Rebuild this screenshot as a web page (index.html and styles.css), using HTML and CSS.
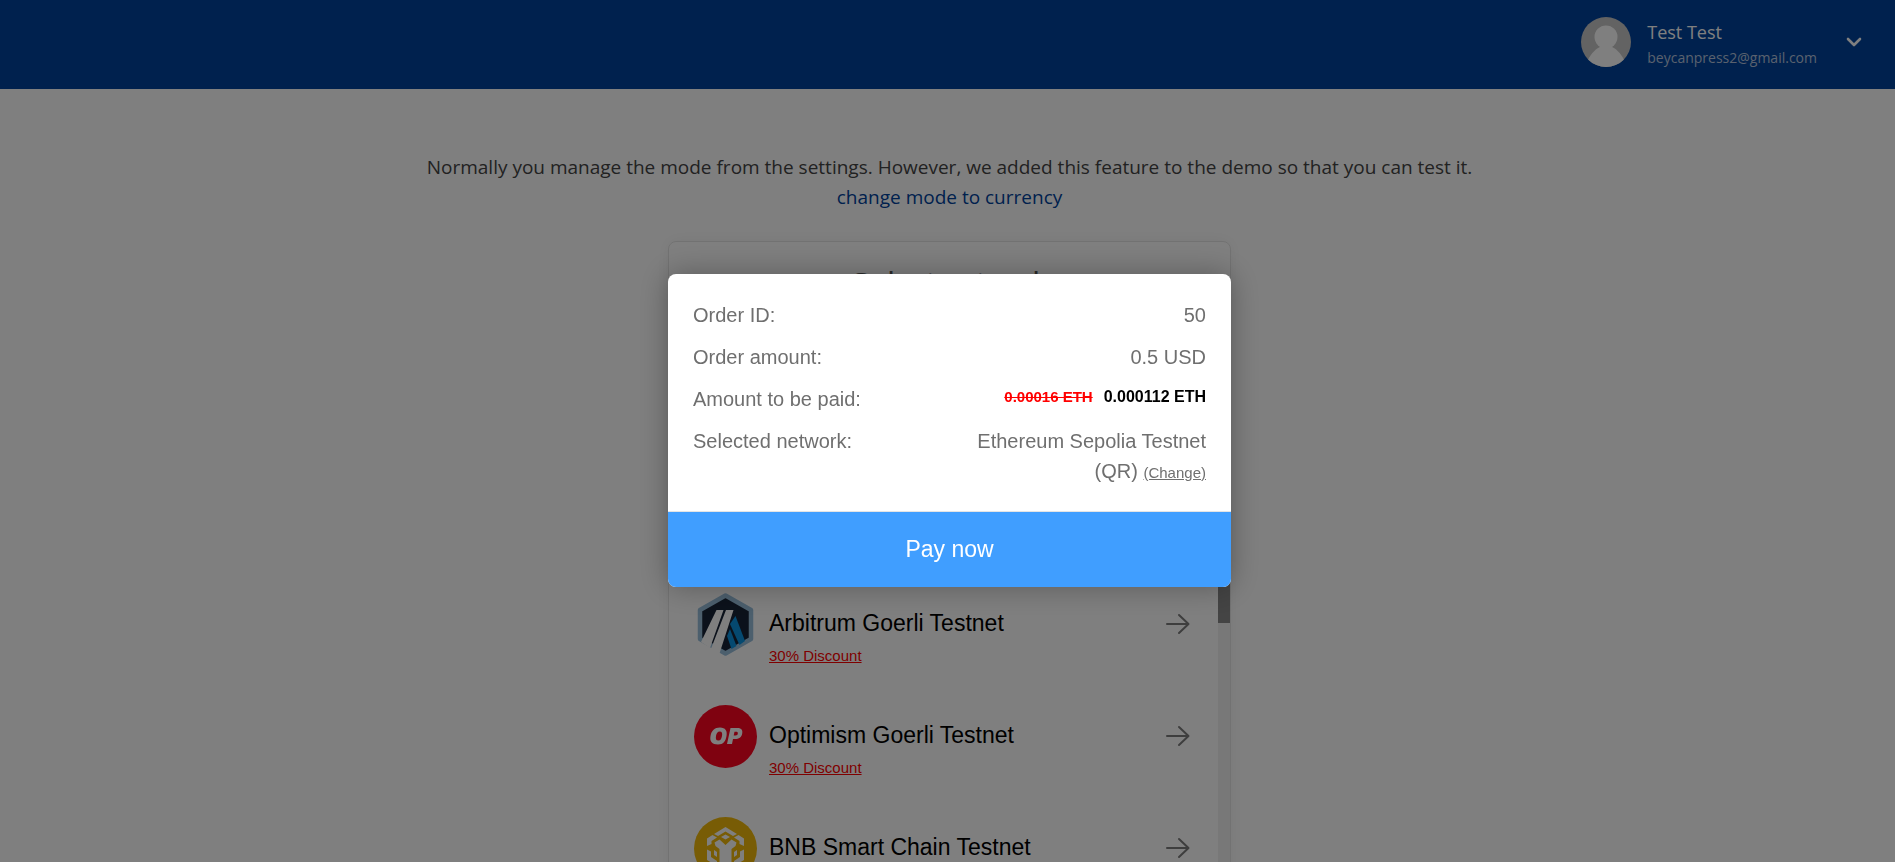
FILE: index.html
```html
<!DOCTYPE html>
<html lang="en">
<head>
<meta charset="utf-8">
<title>Payment</title>
<link rel="stylesheet" href="styles.css">
</head>
<body>
<header class="topbar">
  <svg class="avatar" viewBox="0 0 50 50" aria-hidden="true">
    <defs><clipPath id="round"><circle cx="25" cy="25" r="25"/></clipPath></defs>
    <g clip-path="url(#round)"><rect width="50" height="50" fill="#c6c6c6"/><circle cx="25" cy="20" r="11.5" fill="#fff"/><path d="M7 43C10 36 16 31 20 29.500H30C34 31 40 36 43 43V50H7Z" fill="#fff"/></g>
  </svg>
  <div class="user">
    <span class="user-name">Test Test</span>
    <span class="user-email">beycanpress2@gmail.com</span>
  </div>
  <button class="user-toggle" type="button" aria-label="Account menu">
    <svg width="16" height="12" viewBox="0 0 16 12"><path d="M2 3L8 9L14 3" fill="none" stroke="#fff" stroke-width="2.600" stroke-linecap="round" stroke-linejoin="round"/></svg>
  </button>
</header>

<main class="page">
  <p class="notice">Normally you manage the mode from the settings. However, we added this feature to the demo so that you can test it.<br><a href="#">change mode to currency</a></p>
  <section class="card">
    <h1 class="card-title">Select network</h1>
    <div class="list-wrap">
      <ul class="networks">
        <li><button class="network" type="button">
          <svg class="coin" viewBox="0 0 63 63" aria-hidden="true">
            <path d="M31.500 2.500L57 17V46L31.500 60.500L6 46V17Z" fill="#172336" stroke="#98bedb" stroke-width="4.500" stroke-linejoin="round"/>
            <path d="M41.500 23L51 48L45.500 52L36 31Z" fill="#0a93e0"/>
            <path d="M36 36L42.500 53L37.500 56L33 43Z" fill="#0a93e0"/>
            <path d="M22.500 17H29.500L16 55L7 49Z M32 17H39.500L25 62L16.500 57Z" fill="#fff"/>
          </svg>
          <span class="network-text"><span class="network-name">Arbitrum Goerli Testnet</span><span class="discount">30% Discount</span></span>
          <svg class="arrow" viewBox="0 0 24 22" aria-hidden="true"><path d="M1 11H22M13 2L22.500 11L13 20"/></svg>
        </button></li>
        <li><button class="network" type="button">
          <svg class="coin" viewBox="0 0 63 63" aria-hidden="true">
            <circle cx="31.500" cy="31.500" r="31.500" fill="#ff0420"/>
            <path fill="#fff" fill-rule="evenodd" d="M24 39.500C18 39.500 15.500 36.500 16.500 31C17.600 25.500 20.500 22.500 26 22.500C31.500 22.500 33.500 26 32.500 31C31.500 36.500 29.500 39.500 24 39.500ZM24.500 35.500C26.500 35.500 27.300 34 28 31C28.500 28 28 26.500 25.800 26.500C23.500 26.500 22.600 28 22 31C21.500 34 22 35.500 24.500 35.500ZM33 39L36.500 23H43C47 23 49 24.800 48.200 28.500C47.500 32.500 45 34 41 34H39L38 39ZM39.700 30.500H41.500C43 30.500 43.600 30 43.800 28.600C44 27.200 43.500 26.700 42 26.700H40.500Z"/>
          </svg>
          <span class="network-text"><span class="network-name">Optimism Goerli Testnet</span><span class="discount">30% Discount</span></span>
          <svg class="arrow" viewBox="0 0 24 22" aria-hidden="true"><path d="M1 11H22M13 2L22.500 11L13 20"/></svg>
        </button></li>
        <li><button class="network" type="button">
          <svg class="coin" viewBox="0 0 63 63" aria-hidden="true">
            <circle cx="31.500" cy="31.500" r="31.500" fill="#f0b90b"/>
            <path d="M31.500 10L43 17L39 19L31.500 14.500L24 19L20 17Z" fill="#fff"/>
            <path d="M31.500 17.500L36 20L31.500 22.500L27 20Z" fill="#fff"/>
            <path d="M18.500 18L23 20.500L17.500 24V27L13 29V21.500Z M44.500 18L40 20.500L45.500 24V27L50 29V21.500Z" fill="#fff"/>
            <path d="M20.500 25.500L25.500 22.500L31.500 28L37.500 22.500L42.500 25.500L41.500 29L37.500 32V50L31.500 54L25.500 50V32L21.500 29Z" fill="#fff"/>
            <path d="M13 32.500L17 34.500V40L23 44V49L13 43Z M50 32.500L46 34.500V40L40 44V49L50 43Z M20 33L23 35V40L20 38Z M43 33L40 35V40L43 38Z" fill="#fff"/>
          </svg>
          <span class="network-text"><span class="network-name">BNB Smart Chain Testnet</span></span>
          <svg class="arrow" viewBox="0 0 24 22" aria-hidden="true"><path d="M1 11H22M13 2L22.500 11L13 20"/></svg>
        </button></li>
      </ul>
      <div class="scrollbar"><div class="scroll-thumb"></div></div>
    </div>
  </section>
</main>

<div class="overlay">
  <div class="modal" role="dialog" aria-label="Order summary">
    <dl class="details">
      <div class="row"><dt>Order ID:</dt><dd>50</dd></div>
      <div class="row"><dt>Order amount:</dt><dd>0.5 USD</dd></div>
      <div class="row"><dt>Amount to be paid:</dt><dd class="price"><del>0.00016 ETH</del><strong>0.000112 ETH</strong></dd></div>
      <div class="row"><dt>Selected network:</dt><dd>Ethereum Sepolia Testnet (QR) <a class="change" href="#">(Change)</a></dd></div>
    </dl>
    <button class="pay" type="button">Pay now</button>
  </div>
</div>
</body>
</html>
```

FILE: styles.css
```css
* { box-sizing: border-box; }
body {
  margin: 0;
  height: 100vh;
  overflow: hidden;
  background: #fff;
  font-family: "Open Sans", "Noto Sans", sans-serif;
}
button { border: 0; background: none; padding: 0; cursor: pointer; }
.topbar {
  display: flex;
  align-items: flex-start;
  justify-content: flex-end;
  height: 89px;
  padding: 17px 33px 0 0;
  background: #00429c;
  color: #fff;
}
.avatar { width: 50px; height: 50px; margin-right: 16px; }
.user { display: flex; flex-direction: column; padding-top: 2px; }
.user-name { font-size: 18px; line-height: 26px; }
.user-email { font-size: 14px; line-height: 26px; color: #b4c2dc; }
.user-toggle { margin-left: 29px; padding-top: 19px; }
.user-toggle svg { display: block; }

.page { padding: 63px 0 0 4px; }
.notice {
  margin: 0;
  text-align: center;
  font-size: 19px;
  line-height: 30px;
  color: #444;
}
.notice a { color: #00429c; text-decoration: none; }
.card {
  width: 563px;
  margin: 29px auto 0;
  border: 1px solid #e4e4e4;
  border-radius: 8px;
  box-shadow: 0 0 16px rgba(0, 0, 0, 0.06);
  font-family: "Liberation Sans", Arial, sans-serif;
}
.card-title {
  margin: 24px 0 269px;
  text-align: center;
  font-size: 30px;
  line-height: 34px;
  font-weight: 400;
  color: #555;
}
.list-wrap { display: flex; }
.networks { flex: 1; margin: 0; padding: 0; list-style: none; }
.network {
  display: flex;
  align-items: flex-start;
  width: 100%;
  height: 112px;
  padding: 24px 28px 0 25px;
  font-family: inherit;
  text-align: left;
}
.coin { width: 63px; height: 63px; margin-right: 12px; }
.network-text { flex: 1; display: flex; flex-direction: column; }
.network-name { font-size: 23px; line-height: 28px; padding-top: 16px; color: #000; }
.discount { margin-top: 9px; font-size: 15px; line-height: 20px; color: #ff0000; text-decoration: underline; }
.arrow {
  width: 24px;
  height: 22px;
  margin-top: 20px;
  fill: none;
  stroke: #7c7c7c;
  stroke-width: 2;
  stroke-linecap: round;
  stroke-linejoin: round;
}
.scrollbar { width: 12px; background: #f0f0f0; }
.scroll-thumb { height: 54px; background: #888; }

.overlay {
  position: fixed;
  inset: 0;
  display: flex;
  align-items: center;
  justify-content: center;
  padding: 0 0 2px 4px;
  background: rgba(0, 0, 0, 0.5);
  font-family: "Liberation Sans", Arial, sans-serif;
}
.modal {
  width: 563px;
  overflow: hidden;
  border-radius: 8px;
  background: #fff;
  box-shadow: 0 0 30px rgba(0, 0, 0, 0.3);
}
.details {
  display: flex;
  flex-direction: column;
  gap: 12px;
  margin: 0;
  padding: 26px 25px 25px;
  border-bottom: 1px solid #e4e4e4;
  color: #6f6f6f;
  font-size: 20px;
  line-height: 30px;
}
.row { display: flex; justify-content: space-between; }
.row dd { margin: 0; max-width: 250px; text-align: right; }
.row .price { display: flex; align-items: baseline; gap: 11px; font-size: 16px; line-height: 26px; }
.price del { color: #f00; font-size: 15px; font-weight: 700; }
.price strong { color: #000; }
.change { font-size: 15px; line-height: 20px; color: inherit; }
.pay {
  display: block;
  width: 100%;
  height: 75px;
  background: #409eff;
  color: #fff;
  font-family: inherit;
  font-size: 23px;
}
```
